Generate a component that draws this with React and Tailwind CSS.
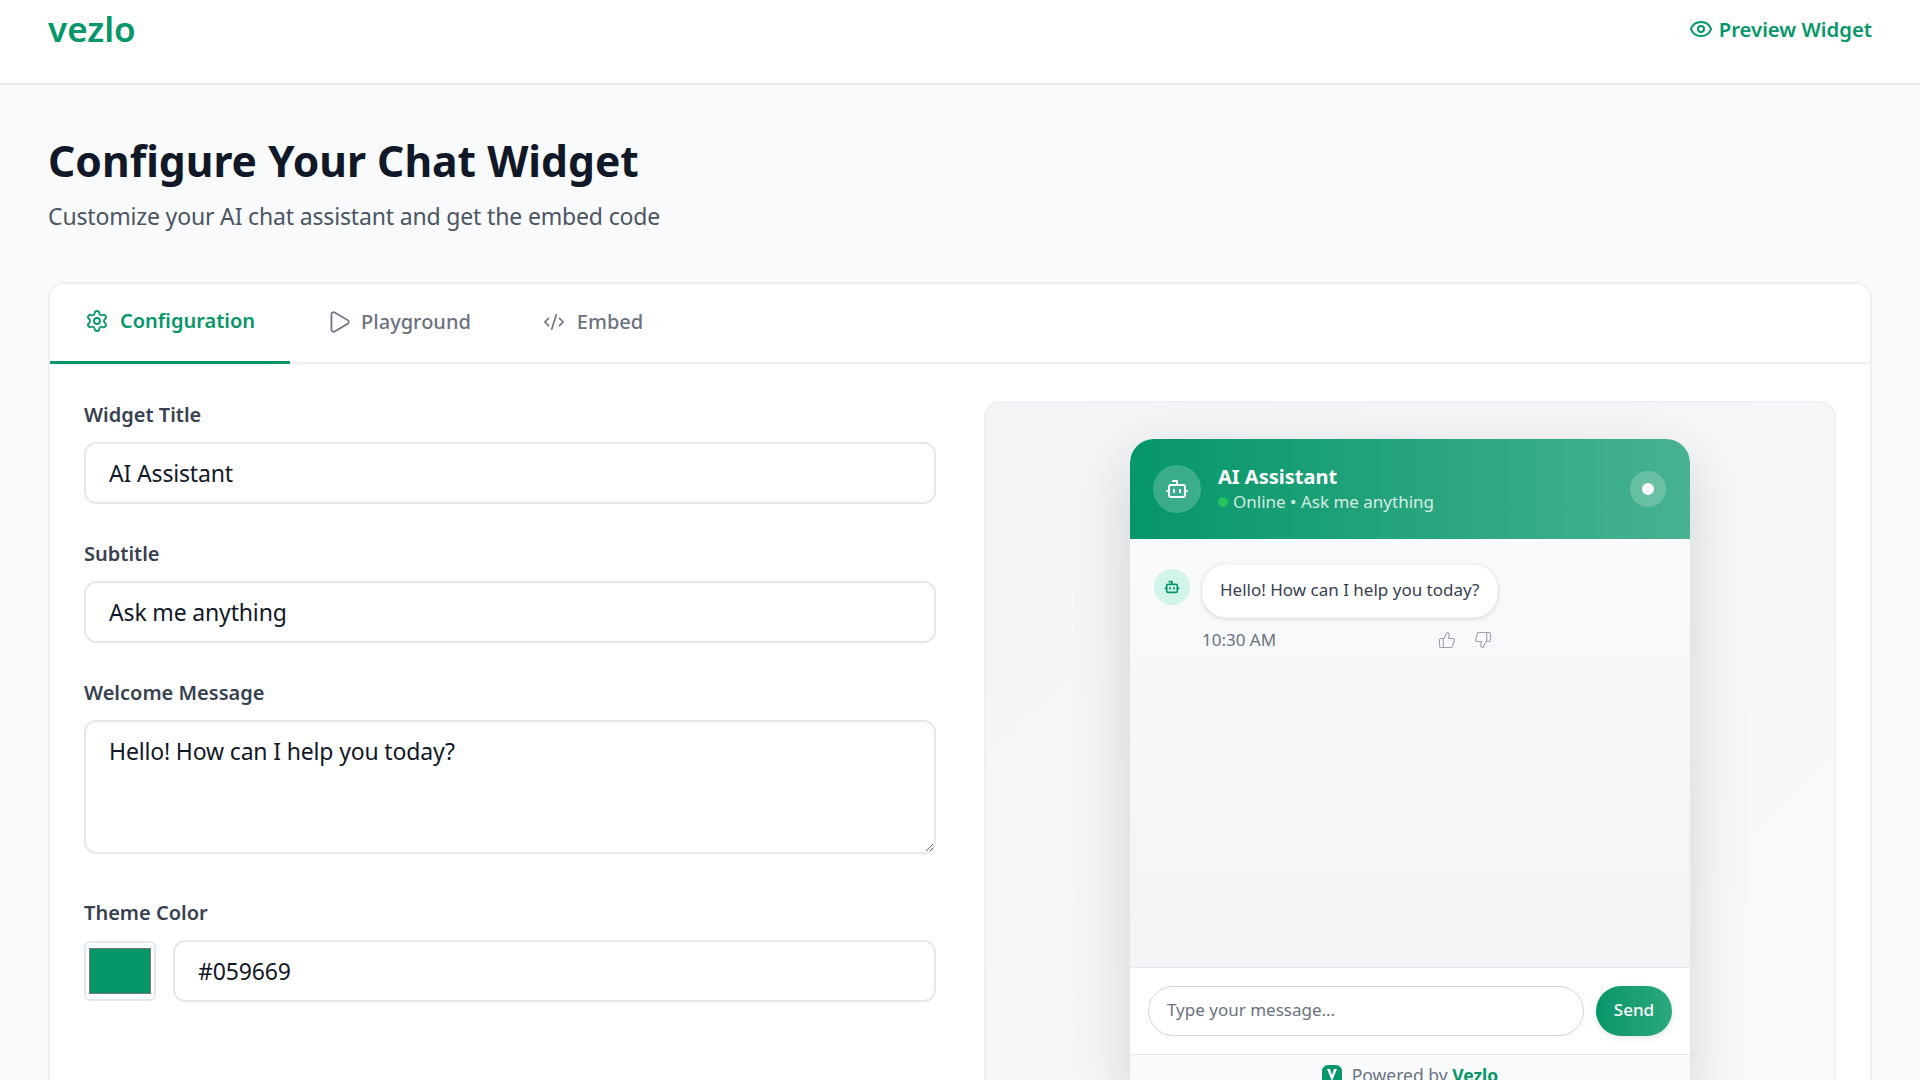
import React from 'react';
import { Eye, Settings, Play, CodeXml, Bot, ThumbsUp, ThumbsDown } from 'lucide-react';

function Field({ label, children, className = '' }) {
  return (
    <div className={className}>
      <label className="block text-[20px] leading-[28px] font-semibold text-[#374151] mb-[13px]">{label}</label>
      {children}
    </div>
  );
}

function TextInput({ value, className = '' }) {
  return (
    <input
      readOnly
      value={value}
      className={`block w-full h-[62px] px-[23px] bg-white border-2 border-[#e5e7eb] rounded-[12px] text-[23px] tracking-[-0.007em] text-[#111827] outline-none ${className}`}
    />
  );
}

function VezloMark() {
  return (
    <svg width="20" height="20" viewBox="0 0 20 20">
      <rect width="20" height="20" rx="6" fill="#059669" />
      <path d="M5 4l5 12 5-12h-3l-2 6-2-6z" fill="white" />
    </svg>
  );
}

function ChatPreview() {
  return (
    <div className="w-[560px] mx-auto rounded-t-[24px] shadow-[0_20px_60px_rgba(0,0,0,0.15)] bg-white">
      <div className="h-[100px] rounded-t-[24px] pl-[23px] pr-[24px] flex items-center gap-[17px] bg-gradient-to-r from-[#059669] to-[#059669bb] text-white">
        <div className="w-[48px] h-[48px] rounded-full bg-white/20 flex items-center justify-center">
          <Bot size={24} strokeWidth={2} />
        </div>
        <div className="flex-1">
          <div className="text-[20px] leading-[23px] font-bold">AI Assistant</div>
          <div className="mt-[3px] flex items-center gap-[5px] text-[17px] leading-[22px] text-white/80">
            <span className="w-[10px] h-[10px] rounded-full bg-[#22c55e]" />
            Online • Ask me anything
          </div>
        </div>
        <div className="w-[36px] h-[36px] rounded-full bg-white/20 flex items-center justify-center">
          <span className="w-[12px] h-[12px] rounded-full bg-white" />
        </div>
      </div>

      <div className="h-[429px] border-b border-[#e5e7eb] bg-gradient-to-b from-[#f9fafb] to-[#f3f4f6] pt-[25px] px-[24px] flex gap-[12px]">
        <div className="mt-[5px] w-[36px] h-[36px] rounded-full bg-[#d1f5ea] flex items-center justify-center text-[#059669]">
          <Bot size={16} strokeWidth={2.5} />
        </div>
        <div className="w-[296px]">
          <div className="h-[54px] w-full px-[17px] pb-[2px] flex items-center whitespace-nowrap bg-white rounded-[24px] border border-[#f3f4f6] shadow-[0_1px_4px_rgba(0,0,0,0.15)] text-[17px] text-[#374151]">
            Hello! How can I help you today?
          </div>
          <div className="mt-[11px] flex items-center text-[17px] leading-[22px] text-[#6b7280]">
            <span className="flex-1">10:30 AM</span>
            <ThumbsUp size={18} strokeWidth={1.5} className="text-[#9ca3af] mr-[18px]" />
            <ThumbsDown size={18} strokeWidth={1.5} className="text-[#9ca3af] mr-[6px]" />
          </div>
        </div>
      </div>

      <div className="h-[87px] bg-white border-b border-[#e5e7eb] px-[18px] flex items-center gap-[12px]">
        <input
          readOnly
          placeholder="Type your message..."
          className="flex-1 min-w-0 h-[50px] rounded-full border border-[#d1d5db] px-[18px] pb-[3px] text-[17px] placeholder:text-[#6b7280] outline-none"
        />
        <div className="w-[76px] h-[50px] pb-[2px] rounded-full bg-gradient-to-r from-[#059669] to-[#2aa87e] text-white text-[17px] font-medium flex items-center justify-center shadow-[0_2px_6px_rgba(0,0,0,0.1)]">
          Send
        </div>
      </div>

      <div className="h-[40px] bg-[#f9fafb] flex items-center justify-center gap-[10px] text-[17.5px] text-[#6b7280]">
        <VezloMark />
        <span>Powered by <span className="font-bold text-[#059669]">Vezlo</span></span>
      </div>
    </div>
  );
}

export default function App() {
  return (
    <div className="h-screen overflow-hidden bg-[#f9fafb] font-['Noto_Sans',sans-serif]">
      <header className="h-[85px] bg-white border-b-2 border-[#e5e7eb] px-[48px] pt-[8px] flex items-start justify-between">
        <div className="text-[35px] leading-[42px] font-semibold text-[#059669]">vezlo</div>
        <div className="flex items-center gap-[6px] h-[42px] text-[20.3px] font-semibold text-[#059669]">
          <Eye size={24} strokeWidth={2} />
          Preview Widget
        </div>
      </header>

      <main className="px-[48px] pt-[49px]">
        <h1 className="text-[42.6px] leading-[52px] font-bold text-[#111827]">Configure Your Chat Widget</h1>
        <p className="mt-[14px] text-[23px] leading-[32px] tracking-[-0.007em] text-[#4b5563]">Customize your AI chat assistant and get the embed code</p>

        <div className="mt-[50px] bg-white border-2 border-[#eff0f3] rounded-[16px]">
          <div className="h-[80px] flex border-b-2 border-[#eff0f3] text-[20px] font-medium text-[#6b7280]">
            <div className="px-[35px] pb-[3px] -mb-[2px] border-b-[3px] border-[#059669] text-[#059669] font-semibold flex items-center gap-[11px]">
              <Settings size={24} strokeWidth={1.8} />
              Configuration
            </div>
            <div className="pl-[36px] pr-[36px] pb-[3px] flex items-center gap-[9px]">
              <Play size={26} strokeWidth={1.6} />
              Playground
            </div>
            <div className="px-[36px] pb-[3px] flex items-center gap-[12px]">
              <CodeXml size={22} strokeWidth={1.8} />
              Embed
            </div>
          </div>

          <div className="grid grid-cols-2 gap-[48px] px-[34px] pt-[37px]">
            <div>
              <Field label="Widget Title"><TextInput value="AI Assistant" /></Field>
              <Field label="Subtitle" className="mt-[36px]"><TextInput value="Ask me anything" /></Field>
              <Field label="Welcome Message" className="mt-[36px]">
                <textarea
                  readOnly
                  value="Hello! How can I help you today?"
                  className="block w-full h-[134px] px-[23px] py-[13px] bg-white border-2 border-[#e5e7eb] rounded-[12px] text-[23px] leading-[32px] tracking-[-0.007em] text-[#111827] outline-none"
                />
              </Field>
              <Field label="Theme Color" className="mt-[45px]">
                <div className="flex gap-[17px] items-center">
                  <input
                    type="color"
                    readOnly
                    value="#059669"
                    className="w-[72px] h-[60px] shrink-0 p-[1px] bg-white border-2 border-[#e5e7eb] rounded-[6px]"
                  />
                  <TextInput value="#059669" className="flex-1" />
                </div>
              </Field>
            </div>

            <div className="h-[800px] bg-gradient-to-br from-[#f3f4f6] to-[#f9fafb] border-2 border-[#eff0f3] rounded-[16px] pt-[36px]">
              <ChatPreview />
            </div>
          </div>
        </div>
      </main>
    </div>
  );
}
